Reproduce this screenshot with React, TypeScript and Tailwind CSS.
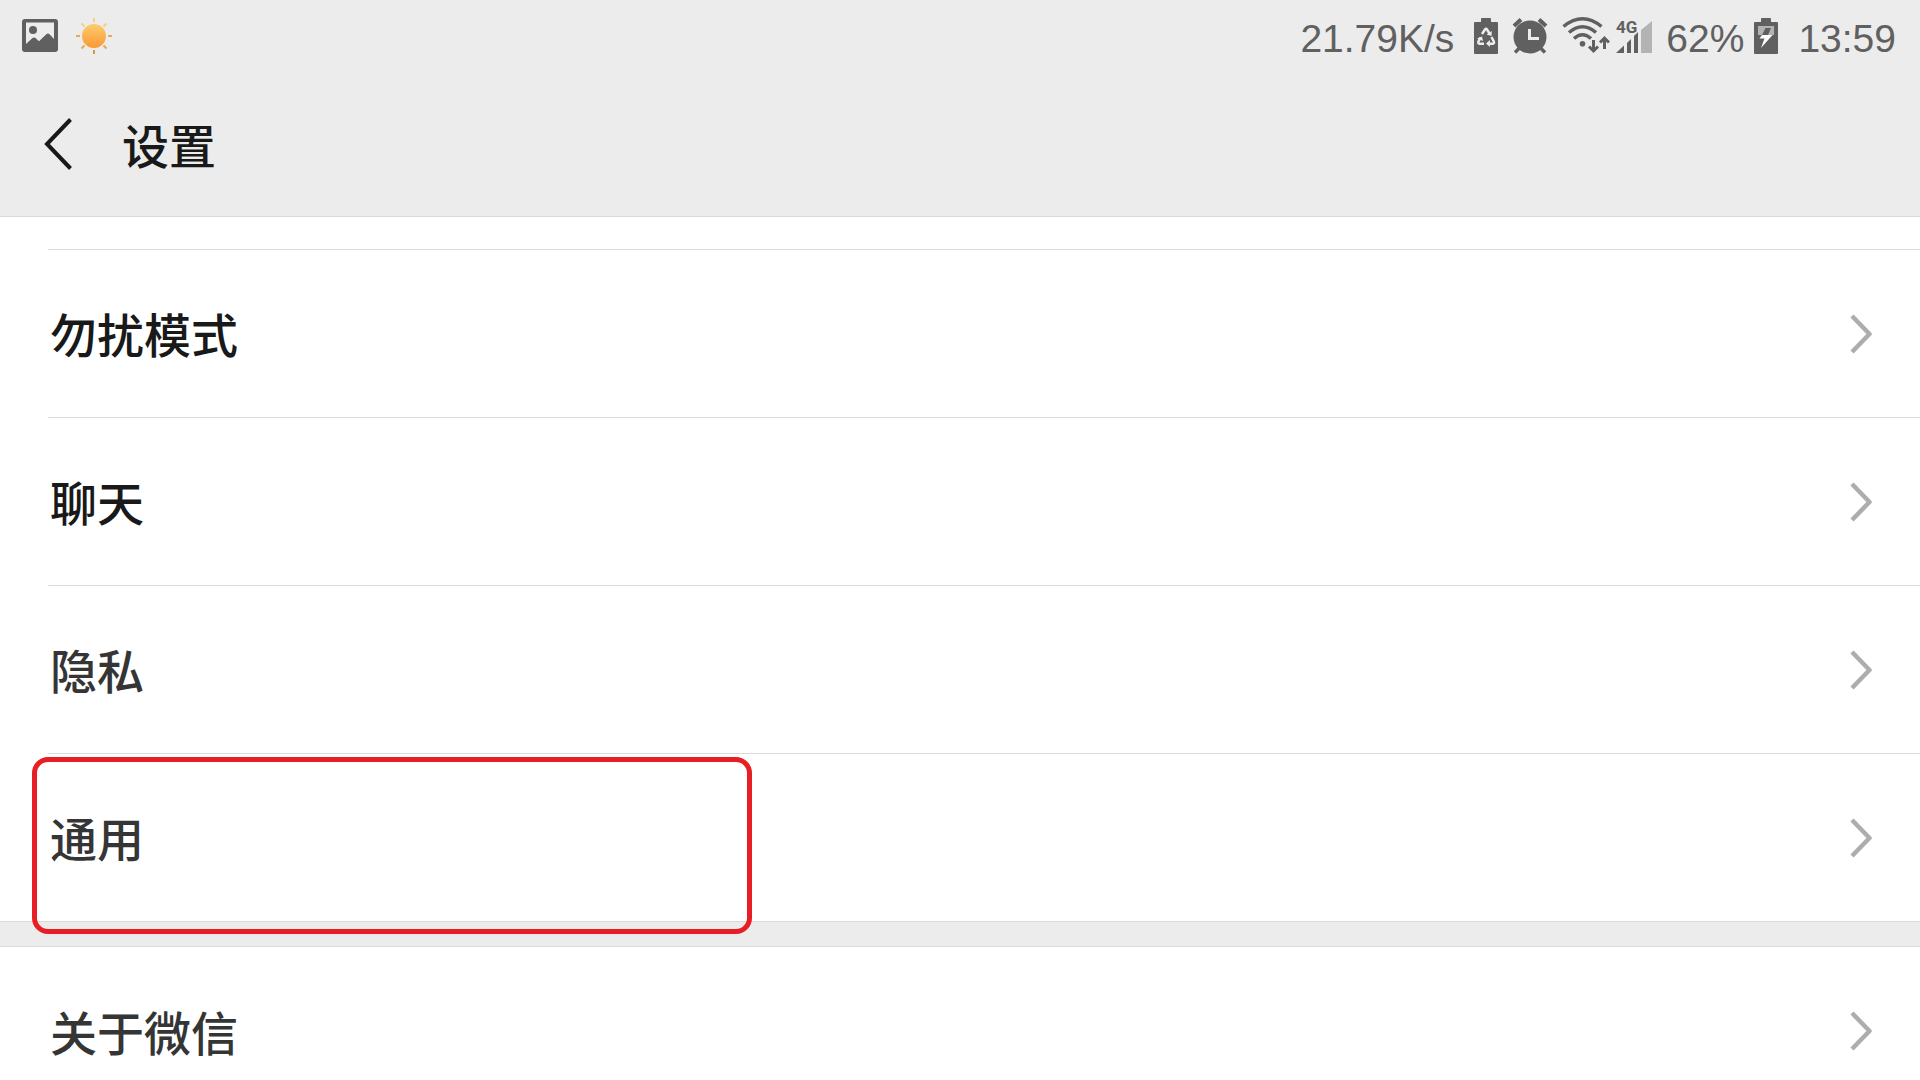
import { FC, ReactNode } from 'react';

interface SettingRowProps {
  label: string;
  tone?: 'dark' | 'soft';
  divider?: 'inset' | 'full' | 'none';
  children?: ReactNode;
}

const tones = {
  dark: 'text-[#191919]',
  soft: 'text-[#353535]',
};

const dividers = {
  inset: 'ml-12 border-b',
  full: 'pl-12 border-b',
  none: 'pl-12',
};

const ImageIcon: FC = () => (
  <svg width="36" height="36" viewBox="0 0 36 36" fill="#606060">
    <path
      fillRule="evenodd"
      d="M3 1h30a3 3 0 0 1 3 3v27a3 3 0 0 1-3 3H3a3 3 0 0 1-3-3V4a3 3 0 0 1 3-3ZM4 4.500v21.500l6.500-6q1.500-1.200 3 0l3.500 3.200 7.300-7q1.700-1.500 3.200 0l4.500 4.800V4.500Z"
    />
    <circle cx="11" cy="12" r="4" />
  </svg>
);

const SunIcon: FC = () => (
  <svg width="36" height="36" viewBox="0 0 36 36">
    <defs>
      <linearGradient id="sun" x1="0" y1="0" x2="0" y2="1">
        <stop offset="0" stopColor="#fdcb70" />
        <stop offset="1" stopColor="#fb9a32" />
      </linearGradient>
    </defs>
    <circle cx="18" cy="18" r="12" fill="url(#sun)" />
    <g strokeWidth="2">
      <path stroke="#f3cf87" d="M18 0v4M5.500 5.500l3 3M30.500 5.500l-3 3" />
      <path stroke="#e5a95c" d="M0 18h4M32 18h4M5.500 30.500l3-3M30.500 30.500l-3-3" />
      <path stroke="#dc9440" d="M18 32v4" />
    </g>
  </svg>
);

const RecycleBatteryIcon: FC = () => (
  <svg width="24" height="36" viewBox="0 0 24 36">
    <path
      fill="#606060"
      d="M8 0h8q1 0 1 1v3h6q1 0 1 1v30q0 1-1 1H1q-1 0-1-1V5q0-1 1-1h6V1q0-1 1-1Z"
    />
    <g fill="none" stroke="#ececec" strokeWidth="2.500">
      <path d="M8 16l3-4.500q1-1.500 2 0l2.500 4" />
      <path d="M6.500 19.500l-2 4q-.8 2 1 2.200H10" />
      <path d="M17.500 19l2.300 4.500q.8 2-1 2.200H15" />
    </g>
    <g fill="#ececec">
      <path d="M12.500 16.500l5 1.500.3-5Z" />
      <path d="M3 20.500l5-2 1 4.500Z" />
      <path d="M16 22v7l-4-3.500Z" />
    </g>
  </svg>
);

const AlarmIcon: FC = () => (
  <svg width="36" height="36" viewBox="0 0 36 36" fill="none" stroke="#606060">
    <circle cx="18" cy="19" r="16.500" fill="#606060" stroke="none" />
    <path strokeWidth="4" d="M2 8l7-6.500M27 1.500L34 8" />
    <path strokeWidth="3.500" d="M3 34.500l5-5M33 34.500l-5-5" />
    <path stroke="#ececec" strokeWidth="3" d="M17.500 11v9.500H27" />
  </svg>
);

const WifiIcon: FC = () => (
  <svg width="48" height="40" viewBox="0 0 48 40" fill="none" stroke="#606060">
    <path strokeWidth="3.500" d="M1.500 10.500Q20.500-5 39.500 10.500" />
    <path strokeWidth="3.500" d="M7 16.500Q20.500 5 34 16.500" />
    <path strokeWidth="3.500" d="M12 22.500Q20.500 15 29 22.500" />
    <circle cx="20.500" cy="27.800" r="2.800" fill="#606060" stroke="none" />
    <path strokeWidth="3" d="M31.500 24v11M27 30.500l4.500 4.500 4.500-4.500" />
    <path strokeWidth="3" d="M42.500 33V22M38 26.500l4.500-4.500 4.500 4.500" />
  </svg>
);

const SignalIcon: FC = () => (
  <svg width="36" height="36" viewBox="0 0 36 36" fill="#606060">
    <text
      x="0"
      y="15"
      className="font-['Roboto',sans-serif] text-[17px] font-bold"
    >
      4G
    </text>
    <path d="M0 35l8-7.500V35ZM11 35V25l4-4v14ZM18 35V18l4-4v21Z" />
    <path fill="#b3b3b3" d="M25 35V12L36 3v32Z" />
  </svg>
);

const ChargingBatteryIcon: FC = () => (
  <svg width="24" height="36" viewBox="0 0 24 36">
    <path
      fill="#606060"
      d="M8 0h8q1 0 1 1v3h6q1 0 1 1v30q0 1-1 1H1q-1 0-1-1V5q0-1 1-1h6V1q0-1 1-1Z"
    />
    <path fill="#b3b3b3" d="M4 8h16v9H4Z" />
    <path fill="#606060" d="M11.500 10h5.500l-3 7H8Z" />
    <path fill="#fff" d="M8 17h10.500L7 30l3.500-9.500h-5Z" />
  </svg>
);

const BackIcon: FC = () => (
  <svg
    width="28"
    height="52"
    viewBox="0 0 28 52"
    fill="none"
    stroke="#191919"
    strokeWidth="4"
  >
    <path d="M26.500 1.500L3 26l23.500 24.500" />
  </svg>
);

const ChevronIcon: FC = () => (
  <svg
    width="22"
    height="40"
    viewBox="0 0 22 40"
    fill="none"
    stroke="#adadad"
    strokeWidth="4.500"
    strokeLinejoin="round"
  >
    <path d="M2 2L19.500 20 2 38" />
  </svg>
);

const StatusBar: FC = () => (
  <div className="flex h-[72px] items-center justify-between pl-[22px] pr-6 text-[39px] leading-none text-[#606060]">
    <div className="flex items-center gap-[18px]">
      <ImageIcon />
      <SunIcon />
    </div>
    <div className="flex items-center">
      <span className="pt-1">21.79K/s</span>
      <div className="ml-5 mr-3.5 flex items-center gap-3.5">
        <RecycleBatteryIcon />
        <AlarmIcon />
        <div className="flex items-center gap-1.5">
          <WifiIcon />
          <SignalIcon />
        </div>
      </div>
      <span className="mr-2.5 pt-1">62%</span>
      <ChargingBatteryIcon />
      <time className="ml-5 pt-1">13:59</time>
    </div>
  </div>
);

const SettingRow: FC<SettingRowProps> = ({
  label,
  tone = 'dark',
  divider = 'inset',
  children,
}) => (
  <li className="relative">
    <a
      href="#"
      className={`flex h-[168px] items-center justify-between border-[#d9d9d9] pr-12 text-[47px] font-medium ${dividers[divider]} ${tones[tone]}`}
    >
      <span className="pl-0.5 pt-2">{label}</span>
      <ChevronIcon />
    </a>
    {children}
  </li>
);

const App: FC = () => {
  return (
    <div className="h-screen overflow-hidden bg-[#ececec] font-['Liberation_Sans','Noto_Sans_CJK_SC',sans-serif]">
      <header className="border-b border-[#dadada]">
        <StatusBar />
        <div className="flex h-36 items-center gap-[50px] pl-11 text-[#191919]">
          <button type="button" aria-label="返回">
            <BackIcon />
          </button>
          <h1 className="pt-2 text-[47px] font-medium">设置</h1>
        </div>
      </header>
      <main>
        <ul className="bg-white">
          <li className="ml-12 h-[33px] border-b border-[#d9d9d9]" />
          <SettingRow label="勿扰模式" />
          <SettingRow label="聊天" />
          <SettingRow label="隐私" tone="soft" />
          <SettingRow label="通用" tone="soft" divider="full">
            <div className="pointer-events-none absolute left-8 top-[3px] h-[177px] w-[720px] rounded-2xl border-5 border-[#e81e25]" />
          </SettingRow>
        </ul>
        <ul className="mt-6 border-t border-[#d9d9d9] bg-white">
          <SettingRow label="关于微信" tone="soft" divider="none" />
        </ul>
      </main>
    </div>
  );
};

export default App;
